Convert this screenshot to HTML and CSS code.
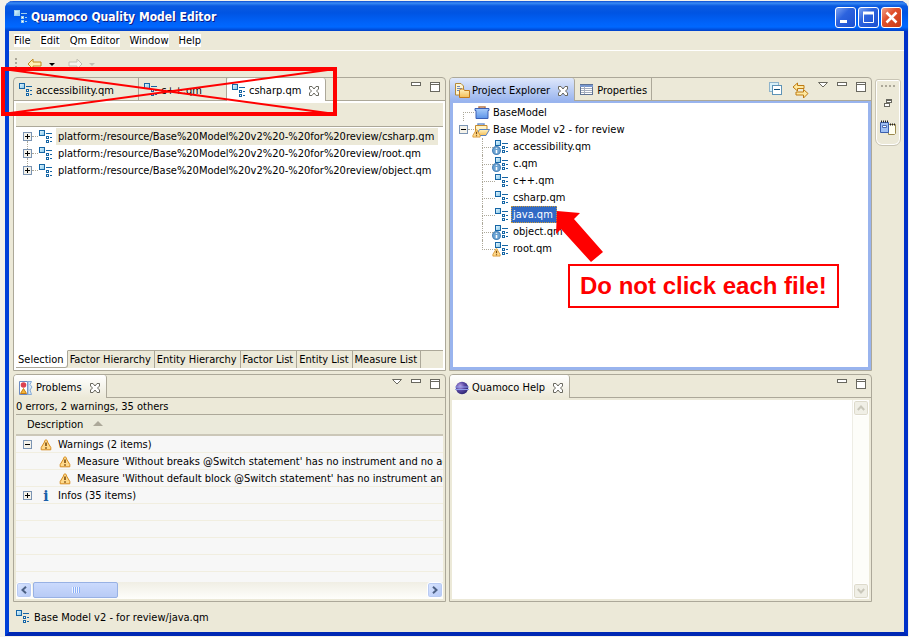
FILE: index.html
```html
<!DOCTYPE html>
<html lang="en">
<head>
<meta charset="utf-8">
<title>Quamoco Quality Model Editor</title>
<link rel="stylesheet" href="styles.css">
</head>
<body>
<svg class="defs" aria-hidden="true">
  <defs>
    <linearGradient id="g-sq" x1="0" y1="0" x2="1" y2="1"><stop offset="0" stop-color="#eaf8ff"/><stop offset="1" stop-color="#7fc4e8"/></linearGradient>
    <linearGradient id="g-folder" x1="0" y1="0" x2="0" y2="1"><stop offset="0" stop-color="#fff3c0"/><stop offset="1" stop-color="#f4bd55"/></linearGradient>
    <linearGradient id="g-blue" x1="0" y1="0" x2="0" y2="1"><stop offset="0" stop-color="#a9cdfa"/><stop offset="1" stop-color="#5b93e8"/></linearGradient>
    <radialGradient id="g-ball" cx=".35" cy=".35" r=".7"><stop offset="0" stop-color="#b9a4e8"/><stop offset=".5" stop-color="#5b4aa5"/><stop offset="1" stop-color="#2c2470"/></radialGradient>
  </defs>
  <symbol id="model" viewBox="0 0 16 16" shape-rendering="crispEdges">
    <rect x="1.500" y="1.500" width="5" height="5" fill="url(#g-sq)" stroke="currentColor"/>
    <path d="M8 4.500h6M12 8.500h2M12 12.500h2" stroke="currentColor"/>
    <path d="M8.500 7.500h2v2h-2zM8.500 11.500h2v2h-2z" fill="#fff" stroke="currentColor"/>
  </symbol>
  <symbol id="close" viewBox="0 0 12 12"><path d="M1.500 1.500h2.500l2 2.500 2-2.500h2.500v2.500l-2 2 2 2v2.500H8l-2-2.500-2 2.500H1.500V8l2-2-2-2z" fill="#fff" stroke="#69685f"/></symbol>
  <symbol id="min" viewBox="0 0 10 10" shape-rendering="crispEdges"><path d="M.5.5h9v3h-9z" fill="#fff" stroke="#69685f"/></symbol>
  <symbol id="max" viewBox="0 0 10 10" shape-rendering="crispEdges"><path d="M.5.5h9v9h-9z" fill="#fff" stroke="#69685f"/><path d="M0 2.500h10" stroke="#69685f"/></symbol>
  <symbol id="viewmenu" viewBox="0 0 10 10"><path d="M.5.5h9L5 5z" fill="#fff" stroke="#69685f"/></symbol>
  <symbol id="warn" viewBox="0 0 12 12"><path d="M6 1C7 1 7.500 1.500 7.500 3l3.300 5.500v2.300H1.200V8.500L4.500 3C4.500 1.500 5 1 6 1z" fill="#ffd98a" stroke="#d58b1d"/><path d="M5.200 3.500h1.600v3.500H5.200zM5.200 8.200h1.600v1.500H5.200z" fill="#7a4b10"/></symbol>
  <symbol id="infodot" viewBox="0 0 8 8"><circle cx="4" cy="4" r="3.500" fill="#6ba3d2" stroke="#4a83b8"/><path d="M4 1.500v1M4 3.500v3" stroke="#fff" stroke-width="1.400"/></symbol>
  <symbol id="closedproj" viewBox="0 0 16 16"><path d="M5 3.500V2h6v1.500" fill="none" stroke="#b5764a" stroke-width="1.500"/><path d="M1 3.500h14v2H14v8H2v-8H1z" fill="url(#g-blue)" stroke="#3a5fb5"/></symbol>
  <symbol id="openproj" viewBox="0 0 16 16"><path d="M4 3.500V2h6v1.500" fill="none" stroke="#6c93cf" stroke-width="1.500"/><path d="M1.500 13.500v-10H13v4" fill="#fff2c4" stroke="#c58a2c"/><path d="M2 13.500 5.500 7.500h10L12 13.500z" fill="url(#g-folder)" stroke="#5881bd"/></symbol>
  <symbol id="plus" viewBox="0 0 9 9" shape-rendering="crispEdges"><path d="M.5.5h8v8h-8z" fill="#f4f2ea" stroke="#7b94b3"/><path d="M2 4.500h5M4.500 2v5" stroke="#000"/></symbol>
  <symbol id="minus" viewBox="0 0 9 9" shape-rendering="crispEdges"><path d="M.5.5h8v8h-8z" fill="#f4f2ea" stroke="#7b94b3"/><path d="M2 4.500h5" stroke="#000"/></symbol>
  <symbol id="explorer" viewBox="0 0 16 16"><path d="M1.500.5H7L9.500 3v9h-8z" fill="#fff5d2" stroke="#b48a3a"/><path d="M3 3.500h3M3 5.500h5M3 7.500h3" stroke="#6d89bf"/><path d="M5.500 14.500v-7l1-1.500h3l1 1.500h5v7z" fill="url(#g-folder)" stroke="#c27a1c"/></symbol>
  <symbol id="props" viewBox="0 0 16 16" shape-rendering="crispEdges"><path d="M1.500 2.500h12v10h-12z" fill="#fff" stroke="#5f7393"/><path d="M1 3.500h13" stroke="#7898cf" stroke-width="2"/><path d="M2 6.500h11M2 8.500h11M2 10.500h11M5.500 4v8" stroke="#a4adbd"/></symbol>
  <symbol id="problems" viewBox="0 0 16 16"><path d="M1.500 1.500h8v13h-8z" fill="#fff" stroke="#6b8ac2"/><path d="M10 1.500h3.500l-1.500 3 2 2.500-2 3 1.500 4.500H10z" fill="#d8e8f8" stroke="#86abd6"/><circle cx="5.500" cy="5" r="2.800" fill="#dc4251"/><path d="M5.500 8.500 8.500 13.500h-6z" fill="#f4b63b" stroke="#c67c12"/></symbol>
  <symbol id="eclipse" viewBox="0 0 16 16"><circle cx="8" cy="8" r="6.200" fill="url(#g-ball)"/><path d="M1 7h14M1 9.500h14" stroke="#8e9be8"/></symbol>
  <symbol id="back" viewBox="0 0 16 12"><path d="M1 6 6 1v3h8v4H6v3z" fill="#fff0b4" stroke="#c08a1e"/></symbol>
  <symbol id="fwd" viewBox="0 0 16 12"><path d="M15 6 10 1v3H2v4h8v3z" fill="#f5f3ec" stroke="#c3c0b4"/></symbol>
  <symbol id="collapse" viewBox="0 0 14 14" shape-rendering="crispEdges"><path d="M.5.5h9v9h-9z" fill="#d8f0f8" stroke="#8fb4cb"/><path d="M3.500 3.500h9v9h-9z" fill="#fff" stroke="#5d93b6"/><path d="M5 7.500h6" stroke="#0d4f7a"/></symbol>
  <symbol id="link" viewBox="0 0 17 17"><path d="M1 5 5.500 1v2.500H12v3H5.500V9z" fill="#ffe9a0" stroke="#be7a12"/><path d="M16 11.500 11.500 7.500V10H4v3h7.500v3z" fill="#ffe9a0" stroke="#be7a12"/></symbol>
  <symbol id="restore" viewBox="0 0 8 8" shape-rendering="crispEdges"><path d="M2.500.5h5v3h-5z" fill="#fff" stroke="#69685f"/><path d="M2 1h6" stroke="#69685f"/><path d="M.5 4.500h5v3h-5z" fill="#fff" stroke="#69685f"/><path d="M0 4.500h6" stroke="#69685f"/></symbol>
  <symbol id="views" viewBox="0 0 17 15"><path d="M8.500 4.500h7v9l-1 1h-6z" fill="#fffef0" stroke="#9c8a4e"/><path d="M.5 2.500h8v10h-8z" fill="#9fc0f4" stroke="#3b5fae"/><path d="M2.500 5.500h4v2h-4z" fill="#fff" stroke="#4b6cb4"/><path d="M1 1.500h8M10 4.500h6" stroke="#222" stroke-dasharray="1 1" stroke-width="2"/></symbol>
  <symbol id="chev" viewBox="0 0 8 8"><path d="M6 .8 2.500 4 6 7.200" fill="none" stroke="currentColor" stroke-width="2"/></symbol>
</svg>

<main class="window">
  <header class="titlebar">
    <svg class="i16"><use href="#model"/></svg>
    <h1>Quamoco Quality Model Editor</h1>
    <button class="caption" aria-label="Minimize window"><svg viewBox="0 0 21 21"><path d="M5 14.500h7" stroke="#fff" stroke-width="3"/></svg></button>
    <button class="caption" aria-label="Maximize window"><svg viewBox="0 0 21 21"><path d="M5.500 6v9.500h10V6" fill="none" stroke="#fff"/><path d="M5 6h11" stroke="#fff" stroke-width="3"/></svg></button>
    <button class="caption red" aria-label="Close window"><svg viewBox="0 0 21 21"><path d="M5.500 5.500l10 10M15.500 5.500l-10 10" stroke="#fff" stroke-width="2.500"/></svg></button>
  </header>
  <nav class="menubar">
    <button>File</button><button>Edit</button><button>Qm Editor</button><button>Window</button><button>Help</button>
  </nav>
  <div class="toolbar">
    <span class="grip"></span>
    <button aria-label="Back"><svg class="nav"><use href="#back"/></svg></button><span class="drop"></span>
    <button aria-label="Forward"><svg class="nav"><use href="#fwd"/></svg></button><span class="drop off"></span>
  </div>

  <div class="workbench">
    <section class="pane editor">
      <div class="tabs">
        <button class="tab idle"><svg class="i16"><use href="#model"/></svg>accessibility.qm</button>
        <button class="tab idle"><svg class="i16"><use href="#model"/></svg>c++.qm</button>
        <button class="tab active"><svg class="i16"><use href="#model"/></svg>csharp.qm<svg class="x"><use href="#close"/></svg></button>
        <div class="tools"><svg class="i10"><use href="#min"/></svg><svg class="i10"><use href="#max"/></svg></div>
      </div>
      <div class="body">
        <div class="formhead"></div>
        <ul class="tree resources">
          <li><svg class="i9"><use href="#plus"/></svg><i class="dots"></i><svg class="i16"><use href="#model"/></svg><span class="label sel">platform:/resource/Base%20Model%20v2%20-%20for%20review/csharp.qm</span></li>
          <li><svg class="i9"><use href="#plus"/></svg><i class="dots"></i><svg class="i16"><use href="#model"/></svg><span class="label">platform:/resource/Base%20Model%20v2%20-%20for%20review/root.qm</span></li>
          <li><svg class="i9"><use href="#plus"/></svg><i class="dots"></i><svg class="i16"><use href="#model"/></svg><span class="label">platform:/resource/Base%20Model%20v2%20-%20for%20review/object.qm</span></li>
        </ul>
        <div class="pages">
          <button class="current">Selection</button><button>Factor Hierarchy</button><button>Entity Hierarchy</button><button>Factor List</button><button>Entity List</button><button>Measure List</button>
        </div>
      </div>
    </section>

    <section class="pane focus">
      <div class="tabs">
        <button class="tab active"><svg class="i16"><use href="#explorer"/></svg>Project Explorer<svg class="x"><use href="#close"/></svg></button>
        <button class="tab"><svg class="i16"><use href="#props"/></svg>Properties</button>
        <div class="tools">
          <svg class="i14"><use href="#collapse"/></svg><svg class="i17"><use href="#link"/></svg><svg class="i10"><use href="#viewmenu"/></svg><svg class="i10"><use href="#min"/></svg><svg class="i10"><use href="#max"/></svg>
        </div>
      </div>
      <div class="body">
        <ul class="tree projects">
          <li><i class="elbow"></i><svg class="i16"><use href="#closedproj"/></svg><span class="label">BaseModel</span></li>
          <li><svg class="i9"><use href="#minus"/></svg><i class="dots"></i><span class="deco"><svg class="i16"><use href="#openproj"/></svg><svg class="badge"><use href="#warn"/></svg></span><span class="label">Base Model v2 - for review</span>
            <ul>
              <li><span class="deco"><svg class="i16"><use href="#model"/></svg><svg class="badge"><use href="#infodot"/></svg></span><span class="label">accessibility.qm</span></li>
              <li><span class="deco"><svg class="i16"><use href="#model"/></svg><svg class="badge"><use href="#infodot"/></svg></span><span class="label">c.qm</span></li>
              <li><span class="deco"><svg class="i16"><use href="#model"/></svg></span><span class="label">c++.qm</span></li>
              <li><span class="deco"><svg class="i16"><use href="#model"/></svg></span><span class="label">csharp.qm</span></li>
              <li><span class="deco"><svg class="i16"><use href="#model"/></svg></span><span class="label picked">java.qm</span></li>
              <li><span class="deco"><svg class="i16"><use href="#model"/></svg><svg class="badge"><use href="#infodot"/></svg></span><span class="label">object.qm</span></li>
              <li><span class="deco"><svg class="i16"><use href="#model"/></svg><svg class="badge"><use href="#warn"/></svg></span><span class="label">root.qm</span></li>
            </ul>
          </li>
        </ul>
      </div>
    </section>

    <aside class="trim">
      <span class="trimgrip"></span>
      <button aria-label="Restore"><svg class="i8"><use href="#restore"/></svg></button>
      <button aria-label="Views"><svg class="i17"><use href="#views"/></svg></button>
    </aside>

    <section class="pane problems">
      <div class="tabs">
        <button class="tab active"><svg class="i16"><use href="#problems"/></svg>Problems<svg class="x"><use href="#close"/></svg></button>
        <div class="tools"><svg class="i10"><use href="#viewmenu"/></svg><svg class="i10"><use href="#min"/></svg><svg class="i10"><use href="#max"/></svg></div>
      </div>
      <div class="body">
        <p class="summary">0 errors, 2 warnings, 35 others</p>
        <div class="rows">
          <table>
            <thead><tr><th>Description <span class="sort"></span></th></tr></thead>
            <tbody>
              <tr><td><div class="cell"><svg class="i9"><use href="#minus"/></svg><svg class="i12"><use href="#warn"/></svg>Warnings (2 items)</div></td></tr>
              <tr><td><div class="cell child"><svg class="i12"><use href="#warn"/></svg>Measure 'Without breaks @Switch statement' has no instrument and no aggr</div></td></tr>
              <tr><td><div class="cell child"><svg class="i12"><use href="#warn"/></svg>Measure 'Without default block @Switch statement' has no instrument and n</div></td></tr>
              <tr><td><div class="cell"><svg class="i9"><use href="#plus"/></svg><span class="info">i</span>Infos (35 items)</div></td></tr>
            </tbody>
          </table>
        </div>
        <div class="hscroll">
          <button aria-label="Scroll left"><svg class="i8"><use href="#chev"/></svg></button>
          <div class="thumb"><span></span></div>
          <button aria-label="Scroll right"><svg class="i8 flip"><use href="#chev"/></svg></button>
        </div>
      </div>
    </section>

    <section class="pane help">
      <div class="tabs">
        <button class="tab active"><svg class="i16"><use href="#eclipse"/></svg>Quamoco Help<svg class="x"><use href="#close"/></svg></button>
        <div class="tools"><svg class="i10"><use href="#min"/></svg><svg class="i10"><use href="#max"/></svg></div>
      </div>
      <div class="body">
        <div class="page"></div>
        <div class="vscroll">
          <button aria-label="Scroll up"><svg class="i8 up"><use href="#chev"/></svg></button>
          <button aria-label="Scroll down"><svg class="i8 down"><use href="#chev"/></svg></button>
        </div>
      </div>
    </section>
  </div>

  <footer class="status"><svg class="i16"><use href="#model"/></svg>Base Model v2 - for review/java.qm</footer>
</main>

<svg class="cross" viewBox="0 0 336 49" aria-hidden="true">
  <path d="M2 2 334 47M2 47 334 2" stroke="#f00" stroke-width="2"/>
  <rect x="2" y="2" width="332" height="45" fill="none" stroke="#f00" stroke-width="4"/>
</svg>
<svg class="arrow" viewBox="0 0 50 54" aria-hidden="true"><path d="M2 1 25 3 19 9 48 42 36 52 6 19 1 24z" fill="#f00"/></svg>
<p class="callout">Do not click each file!</p>
</body>
</html>
```
FILE: styles.css
```css
* { box-sizing: border-box; }
body {
  margin: 0;
  min-height: 100vh;
  padding: 1px 1px 1px 5px;
  display: flex;
  position: relative;
  background: #f4f2ea;
  font: 11px/17px "DejaVu Sans Condensed", Tahoma, sans-serif;
  color: #000;
}
svg { display: block; flex: none; }
button { font: inherit; color: inherit; border: 0; background: none; padding: 0; margin: 0; }
ul, p, h1 { margin: 0; padding: 0; list-style: none; }
.defs { position: absolute; width: 0; height: 0; }
.i8 { width: 8px; height: 8px; }
.i9 { width: 9px; height: 9px; }
.i10 { width: 10px; height: 10px; }
.i12 { width: 12px; height: 12px; }
.i14 { width: 14px; height: 14px; }
.i16 { width: 16px; height: 16px; color: #1565a5; }
.i17 { width: 17px; height: 17px; }

.window {
  flex: 1;
  min-width: 0;
  display: flex;
  flex-direction: column;
  border: solid #0040d8;
  border-width: 0 4px 4px;
  border-color: #0040d8 #0030c8 #0028b4 #0040d8;
  border-radius: 8px 8px 0 0;
  background: #ece9d8;
}
.titlebar {
  height: 30px;
  margin: 0 -4px;
  padding: 2px 6px 0 8px;
  display: flex;
  align-items: center;
  gap: 2px;
  border-radius: 8px 8px 0 0;
  background: linear-gradient(#0a4bd0, #3a8cf5 2px, #0a5ae0 5px, #0054e3 12px, #0063fa 22px, #0068ff 26px, #0040c8);
  color: #fff;
}
.titlebar .i16 { color: #9fd0ee; }
.titlebar h1 {
  flex: 1;
  font: bold 12px/20px "DejaVu Sans Condensed", sans-serif;
  text-shadow: 1px 1px #0a1883;
}
.caption {
  width: 21px;
  height: 21px;
  border: 1px solid #fff;
  border-radius: 3px;
  background: linear-gradient(135deg, #7ba2f2, #2c63de 40%, #1c4fd0);
}
.caption svg { width: 21px; height: 21px; margin: -1px; }
.caption.red { background: linear-gradient(135deg, #f0a088, #e0502c 40%, #c83a14); }

.menubar {
  height: 20px;
  padding: 0 5px;
  display: flex;
  align-items: center;
  gap: 10px;
  border-bottom: 1px solid #fff;
}
.menubar button { background: #fff; line-height: 13px; }
.toolbar { height: 26px; padding: 0 6px; display: flex; align-items: center; }
.nav { width: 16px; height: 12px; margin-left: 6px; }
.grip { width: 2px; height: 12px; margin-right: 4px; background: repeating-linear-gradient(#aca899 0 2px, #ece9d8 2px 4px); }
.drop { border: 3px solid transparent; border-top-color: #000; border-bottom: 0; margin: 0 6px; }
.drop.off { border-top-color: #c3c0b4; }

.workbench {
  flex: 1;
  display: grid;
  grid-template-columns: minmax(0, 433fr) minmax(0, 423fr) 29px;
  grid-template-rows: minmax(0, 294fr) minmax(0, 228fr);
  gap: 3px;
  padding-left: 4px;
}
.pane {
  min-width: 0;
  min-height: 0;
  display: flex;
  flex-direction: column;
  border: 1px solid #aca899;
  border-radius: 4px 4px 0 0;
}
.tabs { height: 23px; display: flex; border-bottom: 1px solid #aca899; }
.tab {
  display: flex;
  align-items: center;
  gap: 2px;
  padding: 2px 4px 0;
  height: 22px;
  white-space: nowrap;
  border-right: 1px solid #aca899;
}
.tab.idle { padding-right: 24px; }
.tab.active {
  height: 23px;
  padding-right: 5px;
  border-radius: 3px 3px 0 0;
  background: linear-gradient(#fff, #ece9d8);
}
.editor .tab.active { background: #fff; }
.focus .tab.active { background: linear-gradient(#dfe8fb, #99b4ee); }
.x { width: 12px; height: 12px; margin-left: 5px; }
.tools { margin-left: auto; padding: 4px 5px 0; display: flex; gap: 9px; }
.body { flex: 1; min-height: 0; display: flex; flex-direction: column; padding: 2px; }
.editor .body { background: #fff; }
.focus .body { background: #fff; border: 3px solid #99b4ee; border-top-width: 2px; padding: 0; }
.formhead { height: 24px; background: #ece9d8; border-bottom: 1px solid #aca899; }

.tree { flex: 1; min-height: 0; overflow: hidden; white-space: nowrap; padding-top: 1px; }
.tree li { display: flex; flex-wrap: wrap; align-items: center; }
.tree .label { line-height: 17px; padding: 0 2px; }
.resources { padding-left: 7px; }
.resources li { position: relative; }
.resources li + li::before {
  content: "";
  position: absolute;
  left: 4px;
  top: -4px;
  height: 8px;
  border-left: 1px dotted #aca899;
}
.resources .label { margin-left: 2px; }
.resources .sel { background: #ece9d8; padding-right: 4px; }
.dots { width: 6px; border-top: 1px dotted #aca899; }
.projects { padding-left: 6px; }
.projects .elbow { width: 11px; height: 9px; margin: 8px 0 0 4px; border: dotted #aca899; border-width: 1px 0 0 1px; }
.projects > li > .label { margin-left: 1px; }
.projects ul { width: 100%; padding-left: 23px; }
.projects ul li { position: relative; padding-left: 12px; }
.projects ul .label { margin-left: 1px; }
.projects ul li::before {
  content: "";
  position: absolute;
  left: 0;
  top: 0;
  width: 12px;
  height: 9px;
  border: dotted #aca899;
  border-width: 0 0 1px 1px;
}
.projects ul li:not(:last-child)::after {
  content: "";
  position: absolute;
  left: 0;
  top: 9px;
  height: 8px;
  border-left: 1px dotted #aca899;
}
.deco { position: relative; }
.badge { position: absolute; left: -2px; bottom: 0; width: 9px; height: 9px; }
.tree .picked { background: #316ac5; color: #fff; outline: 1px dotted #ce9d3a; outline-offset: -1px; padding-right: 4px; }

.pages { height: 18px; display: flex; background: #ece9d8; }
.pages button { padding: 0 3px 0 2px; border: solid #aca899; border-width: 1px 1px 0 0; white-space: nowrap; }
.pages .current { background: #fff; border-top-color: #fff; border-radius: 0 0 3px; box-shadow: inset 0 -1px #aca899; }
.pages::after { content: ""; flex: 1; border-top: 1px solid #aca899; }

.problems .body { padding-top: 0; }
.summary { height: 17px; border-bottom: 1px solid #aca899; }
.rows {
  flex: 1;
  min-height: 0;
  overflow: hidden;
  background: repeating-linear-gradient(#f7f7f7 0 16px, #f1eee0 16px 17px) 0 21px;
}
.rows table { width: 100%; table-layout: fixed; border-spacing: 0; }
.rows th { height: 21px; padding: 0 11px; text-align: left; font-weight: normal; border-bottom: 2px solid #cbc7b8; background: #ebeadb; }
.rows td { padding: 0; height: 17px; }
.cell { display: flex; align-items: center; height: 17px; padding-left: 7px; white-space: nowrap; overflow: hidden; }
.cell .i12 { margin: 0 6px 0 8px; }
.cell.child { padding-left: 35px; }
.info { width: 12px; margin: 0 6px 0 8px; text-align: center; font: bold 14px/16px "DejaVu Serif", serif; color: #1a5fa8; }
.sort { display: inline-block; margin: 0 0 2px 6px; border: 5px solid transparent; border-bottom-color: #aca899; border-top: 0; }
.hscroll { height: 17px; display: flex; gap: 1px; background: linear-gradient(#f0eee4, #fefefb); }
.hscroll button, .vscroll button {
  width: 16px;
  height: 16px;
  display: grid;
  place-items: center;
  border: 1px solid #fff;
  border-radius: 3px;
  background: linear-gradient(135deg, #dbe6ff, #b4c8f6);
  box-shadow: inset 0 0 0 1px #b9cbf3;
  color: #4d6185;
}
.hscroll button:last-child { margin-left: auto; }
.thumb { width: 20%; height: 16px; display: grid; place-items: center; border: 1px solid #98b1e4; border-radius: 2px; background: linear-gradient(#cbdafd, #b8cbf6); }
.thumb span { width: 8px; height: 6px; background: repeating-linear-gradient(90deg, #eef4fe 0 1px, #8cb0f8 1px 2px); }
.flip { transform: rotate(180deg); }
.up { transform: rotate(90deg); }
.down { transform: rotate(-90deg); }
.help .body { flex-direction: row; }
.page { flex: 1; background: #fff; }
.vscroll { width: 17px; display: flex; flex-direction: column; justify-content: space-between; background: #fdfdf9; border-left: 1px solid #eeede5; }
.vscroll button { background: #f0efe6; box-shadow: inset 0 0 0 1px #dddacb; color: #c9c7ba; }

.trim {
  align-self: start;
  margin: 2px 3px 0 0;
  height: 67px;
  padding-top: 5px;
  display: flex;
  flex-direction: column;
  align-items: center;
  gap: 12px;
  border: 1px solid #c9c5b5;
  border-radius: 3px 3px 7px 7px;
  box-shadow: inset 0 0 0 1px #fff;
}
.trimgrip { width: 14px; height: 2px; background: repeating-linear-gradient(90deg, #aca899 0 2px, #ece9d8 2px 4px); }
.status { height: 30px; padding-left: 6px; display: flex; align-items: center; gap: 3px; }

.cross { position: absolute; left: 1px; top: 67px; width: 336px; height: 49px; }
.arrow { position: absolute; left: 555px; top: 210px; width: 50px; height: 54px; }
.callout {
  position: absolute;
  left: 568px;
  top: 264px;
  padding: 6px 10px;
  border: 2px solid #f00;
  background: #fff;
  color: #f00;
  font: bold 24px/28px "Liberation Sans", Arial, sans-serif;
  white-space: nowrap;
}
```
